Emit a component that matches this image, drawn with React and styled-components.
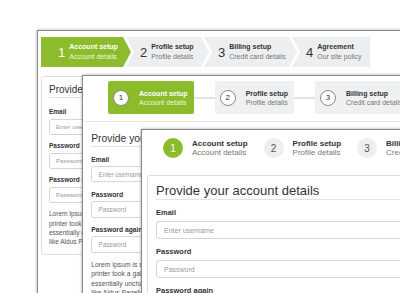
import React from "react";
import styled, { createGlobalStyle } from "styled-components";

const GREEN = "#8cbc2b";

const Global = createGlobalStyle`
  html, body {
    margin: 0;
    padding: 0;
    background: #fff;
  }
  body {
    font-family: "Liberation Sans", Arial, sans-serif;
  }
`;

const Desk = styled.div`
  position: relative;
  width: 400px;
  height: 293px;
  overflow: hidden;
  background: #fff;
`;

// each screenshot sits on the canvas like a window on a desktop
const Window = styled.div`
  position: absolute;
  left: ${(p) => p.$x}px;
  top: ${(p) => p.$y}px;
  width: 440px;
  height: 320px;
  background: #fff;
  border: 1px solid #8a8a8a;
  box-shadow: 0 0 3px rgba(0, 0, 0, 0.35);
  overflow: hidden;
`;

/* ---------- arrow style steps ---------- */

const clips = {
  first: "polygon(0 0, calc(100% - 8px) 0, 100% 50%, calc(100% - 8px) 100%, 0 100%)",
  middle:
    "polygon(0 0, calc(100% - 8px) 0, 100% 50%, calc(100% - 8px) 100%, 0 100%, 8px 50%)",
  last: "polygon(0 0, 100% 0, 100% 100%, 0 100%, 8px 50%)",
};

const ArrowBar = styled.div`
  display: flex;
  padding: 6px 0 0 3px;
`;

const ArrowStep = styled.div`
  flex: none;
  box-sizing: border-box;
  display: flex;
  align-items: center;
  width: ${(p) => p.$w}px;
  height: 30px;
  padding-left: ${(p) => p.$pl}px;
  margin-left: ${(p) => (p.$shape === "first" ? 0 : -5)}px;
  background: ${(p) => (p.$active ? GREEN : "#eceef0")};
  color: ${(p) => (p.$active ? "#fff" : "#333")};
  clip-path: ${(p) => clips[p.$shape]};
`;

const BigNum = styled.span`
  font-size: 13px;
  line-height: 1;
  margin-right: 4px;
`;

const StepText = styled.div`
  display: flex;
  flex-direction: column;
  font-size: ${(p) => p.$size}px;
  line-height: ${(p) => p.$lh}px;
  white-space: nowrap;
`;

const StepTitle = styled.span`
  font-weight: bold;
  color: ${(p) => (p.$active ? "#fff" : "#333")};
`;

const StepSub = styled.span`
  color: ${(p) => (p.$active ? "#eef6dc" : "#777")};
`;

/* ---------- boxed steps ---------- */

const BoxBar = styled.div`
  display: flex;
  align-items: center;
  padding: 5px 0 7px 25px;
  border-bottom: 1px solid #e6e6e6;
`;

const BoxStep = styled.div`
  flex: none;
  display: flex;
  align-items: center;
  box-sizing: border-box;
  height: 33px;
  padding: 0 6px 0 5px;
  border-radius: 2px;
  background: ${(p) => (p.$active ? GREEN : "#eff0f1")};
`;

const Link = styled.div`
  flex: none;
  width: 21px;
  height: 2px;
  background: #e3e3e3;
`;

const Ring = styled.span`
  flex: none;
  box-sizing: border-box;
  width: 16px;
  height: 16px;
  margin-right: 10px;
  border: 1.5px solid #8a8a8a;
  border-radius: 50%;
  background: #fff;
  color: #333;
  font-size: 8px;
  display: flex;
  align-items: center;
  justify-content: center;
`;

/* ---------- dot steps ---------- */

const DotBar = styled.div`
  display: flex;
  align-items: center;
  gap: 16px;
  padding: 8px 0 8px 21px;
`;

const DotStep = styled.div`
  flex: none;
  display: flex;
  align-items: center;
`;

const Dot = styled.span`
  flex: none;
  width: 20px;
  height: 20px;
  margin-right: 9px;
  border-radius: 50%;
  background: ${(p) => (p.$active ? GREEN : "#eeeeee")};
  color: ${(p) => (p.$active ? "#fff" : "#555")};
  font-size: 10px;
  display: flex;
  align-items: center;
  justify-content: center;
`;

/* ---------- form panel ---------- */

const Panel = styled.div`
  zoom: ${(p) => p.$zoom};
  margin: ${(p) => p.$m};
  padding: 8px 8px 9px;
  border: 1px solid ${(p) => (p.$bordered ? "#dedede" : "transparent")};
  border-radius: 3px;
  color: #333;
`;

const Heading = styled.h2`
  margin: 0 0 ${(p) => p.$gap}px;
  padding-bottom: 2px;
  border-bottom: 1px solid #e3e3e3;
  font-size: ${(p) => p.$size}px;
  line-height: 13px;
  font-weight: normal;
  white-space: nowrap;
`;

const Group = styled.div`
  margin-bottom: 8px;
`;

const Label = styled.label`
  display: block;
  margin-bottom: 3px;
  font-size: 7.5px;
  line-height: 10px;
  font-weight: bold;
`;

const Field = styled.input`
  display: block;
  box-sizing: border-box;
  width: 100%;
  height: 18px;
  margin: 0;
  padding: 0 7px;
  border: 1px solid #d5d5d5;
  border-radius: 3px;
  background: #fff;
  font-family: inherit;
  font-size: 7px;
  outline: none;

  &::placeholder {
    color: #9a9a9a;
  }
`;

const Lorem = styled.div`
  font-size: 7.5px;
  line-height: 10.5px;
  color: #555;
  white-space: nowrap;
`;

const loremLines = [
  "Lorem Ipsum is simply dummy text of the printing and typesetting industry. Lorem Ipsum has been the industry's standard dummy text ever since the 1500s, when an unknown",
  "printer took a galley of type and scrambled it to make a type specimen book. It has survived not only five centuries, but also the leap into electronic typesetting, remaining",
  "essentially unchanged. It was popularised in the 1960s with the release of Letraset sheets containing Lorem Ipsum passages, and more recently with desktop publishing",
  "like Aldus PageMaker including versions of Lorem Ipsum.",
];

const steps = [
  { n: 1, title: "Account setup", sub: "Account details" },
  { n: 2, title: "Profile setup", sub: "Profile details" },
  { n: 3, title: "Billing setup", sub: "Credit card details" },
  { n: 4, title: "Agreement", sub: "Our site policy" },
];

const AccountForm = ({ zoom, margin, bordered, headGap, headSize }) => (
  <Panel $zoom={zoom} $m={margin} $bordered={bordered}>
    <Heading $gap={headGap} $size={headSize}>
      Provide your account details
    </Heading>
    <Group>
      <Label>Email</Label>
      <Field placeholder="Enter username" readOnly />
    </Group>
    <Group>
      <Label>Password</Label>
      <Field placeholder="Password" readOnly />
    </Group>
    <Group>
      <Label>Password again</Label>
      <Field placeholder="Password" readOnly />
    </Group>
    <Lorem>
      {loremLines.map((line) => (
        <div key={line}>{line}</div>
      ))}
    </Lorem>
  </Panel>
);

const arrowLayout = [
  { w: 90, pl: 17, shape: "first" },
  { w: 83, pl: 14, shape: "middle" },
  { w: 93, pl: 14, shape: "middle" },
  { w: 78, pl: 14, shape: "last" },
];

const App = () => (
  <>
    <Global />
    <Desk>
      <Window $x={37} $y={30}>
        <ArrowBar>
          {steps.map((s, i) => (
            <ArrowStep
              key={s.n}
              $w={arrowLayout[i].w}
              $pl={arrowLayout[i].pl}
              $shape={arrowLayout[i].shape}
              $active={i === 0}
            >
              <BigNum>{s.n}</BigNum>
              <StepText $size={7} $lh={10}>
                <StepTitle $active={i === 0}>{s.title}</StepTitle>
                <StepSub $active={i === 0}>{s.sub}</StepSub>
              </StepText>
            </ArrowStep>
          ))}
        </ArrowBar>
        <AccountForm
          zoom={0.87}
          margin="10px 0 0 3.5px"
          bordered
          headGap={11.5}
          headSize={11.5}
        />
      </Window>

      <Window $x={82} $y={75}>
        <BoxBar>
          {steps.slice(0, 3).map((s, i) => (
            <React.Fragment key={s.n}>
              {i > 0 && <Link />}
              <BoxStep $active={i === 0}>
                <Ring>{s.n}</Ring>
                <StepText $size={7} $lh={9}>
                  <StepTitle $active={i === 0}>{s.title}</StepTitle>
                  <StepSub $active={i === 0}>{s.sub}</StepSub>
                </StepText>
              </BoxStep>
            </React.Fragment>
          ))}
        </BoxBar>
        <AccountForm zoom={0.9} margin="3px 0 0 0" headGap={8} headSize={11.5} />
      </Window>

      <Window $x={141} $y={129}>
        <DotBar>
          {steps.slice(0, 3).map((s, i) => (
            <DotStep key={s.n}>
              <Dot $active={i === 0}>{s.n}</Dot>
              <StepText $size={8} $lh={9}>
                <StepTitle>{s.title}</StepTitle>
                <StepSub>{s.sub}</StepSub>
              </StepText>
            </DotStep>
          ))}
        </DotBar>
        <AccountForm zoom={1} margin="9px 0 0 5px" bordered headGap={8} headSize={13} />
      </Window>
    </Desk>
  </>
);

export default App;
